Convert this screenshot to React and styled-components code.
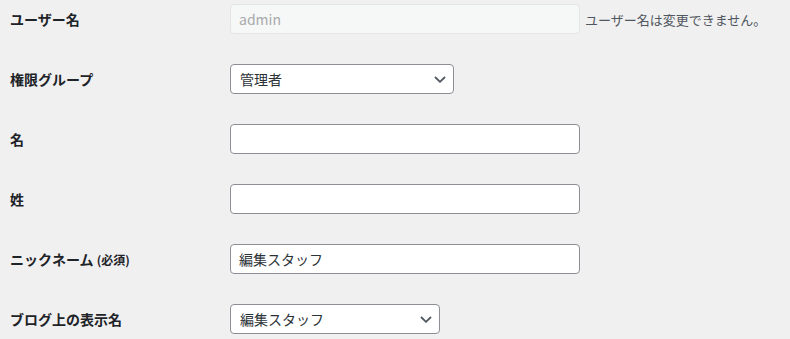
import React from "react";
import styled, { createGlobalStyle } from "styled-components";

const Global = createGlobalStyle`
  html, body { margin: 0; padding: 0; background: #f0f0f1; }
  body { font-family: "Noto Sans CJK JP", "Noto Sans", sans-serif; color: #1d2327; overflow: hidden; }
`;

const Form = styled.div`
  margin-top: -11px;
  padding-left: 10px;
  display: flex;
  flex-direction: column;
`;

const Row = styled.div`
  display: grid;
  grid-template-columns: 220px 1fr;
  align-items: center;
  height: 60px;
`;

const Label = styled.label`
  font-size: 14px;
  font-weight: 700;
  line-height: 1.3;
  color: #1d2327;
`;

const Small = styled.span`
  font-size: 12px;
`;

const Cell = styled.div`
  display: flex;
  align-items: center;
  gap: 5px;
`;

const TextInput = styled.input`
  box-sizing: border-box;
  width: 350px;
  height: 30px;
  padding: 0 8px;
  font-family: "Noto Sans CJK JP", "Noto Sans", sans-serif;
  font-size: 14px;
  color: #2c3338;
  background: ${(p) => (p.disabled ? "#f6f7f7" : "#fff")};
  border: 1px solid ${(p) => (p.disabled ? "#e2e4e7" : "#8c8f94")};
  border-radius: 4px;
  outline: none;
  &:disabled { color: #a7aaad; }
`;

const SelectBox = styled.div`
  position: relative;
  box-sizing: border-box;
  width: ${(p) => p.w}px;
  height: 30px;
  padding: 0 24px 0 9px;
  display: flex;
  align-items: center;
  font-size: 14px;
  color: #2c3338;
  background: #fff;
  border: 1px solid #8c8f94;
  border-radius: 4px;
`;

const Chevron = styled.svg`
  position: absolute;
  right: 7px;
  top: 11px;
  width: 12px;
  height: 7px;
`;

const Desc = styled.span`
  font-size: 13px;
  color: #50575e;
`;

function Select({ w, value }) {
  return (
    <SelectBox w={w}>
      {value}
      <Chevron viewBox="0 0 12 7">
        <polyline points="1,1 6,5.8 11,1" fill="none" stroke="#50575e" strokeWidth="1.8" />
      </Chevron>
    </SelectBox>
  );
}

export default function App() {
  return (
    <>
      <Global />
      <Form>
        <Row>
          <Label>ユーザー名</Label>
          <Cell>
            <TextInput disabled value="admin" readOnly />
            <Desc>ユーザー名は変更できません。</Desc>
          </Cell>
        </Row>
        <Row>
          <Label>権限グループ</Label>
          <Cell>
            <Select w={224} value="管理者" />
          </Cell>
        </Row>
        <Row>
          <Label>名</Label>
          <Cell>
            <TextInput defaultValue="" />
          </Cell>
        </Row>
        <Row>
          <Label>姓</Label>
          <Cell>
            <TextInput defaultValue="" />
          </Cell>
        </Row>
        <Row>
          <Label>
            ニックネーム <Small>(必須)</Small>
          </Label>
          <Cell>
            <TextInput defaultValue="編集スタッフ" />
          </Cell>
        </Row>
        <Row>
          <Label>ブログ上の表示名</Label>
          <Cell>
            <Select w={210} value="編集スタッフ" />
          </Cell>
        </Row>
      </Form>
    </>
  );
}
